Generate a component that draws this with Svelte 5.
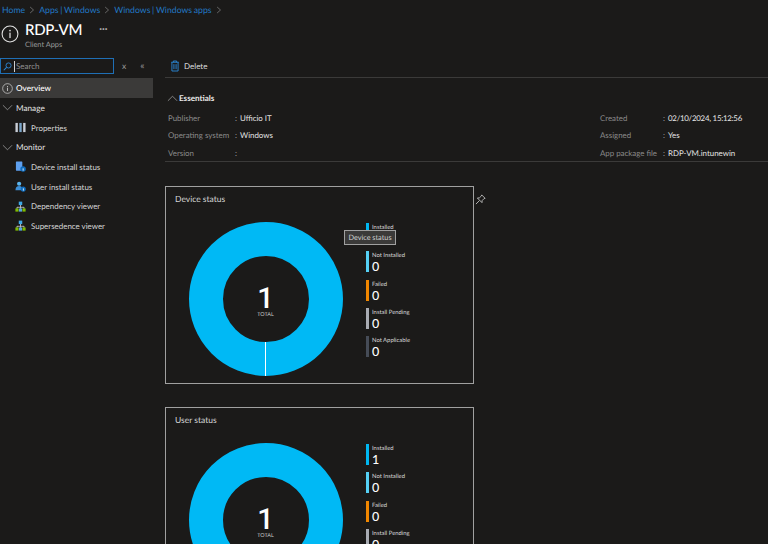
<script>
  const crumbs = ['Home', 'Apps | Windows', 'Windows | Windows apps'];
  const left = [['Publisher', 'Ufficio IT'], ['Operating system', 'Windows'], ['Version', '']];
  const right = [['Created', '02/10/2024, 15:12:56'], ['Assigned', 'Yes'], ['App package file', 'RDP-VM.intunewin']];
  const legend = (installed) => [
    ['Installed', installed, '#00b7f1'],
    ['Not Installed', 0, '#55d0f5'],
    ['Failed', 0, '#f18700'],
    ['Install Pending', 0, '#a9acb3'],
    ['Not Applicable', 0, '#464c57']
  ];
  const cards = [
    { title: 'Device status', installed: '', tooltip: true },
    { title: 'User status', installed: 1, tooltip: false }
  ];
</script>

{#snippet chevron(up)}
  <svg class="chev" viewBox="0 0 12 12" width="11" height="11">
    <path d={up ? 'M1 8.5 6 3.5l5 5' : 'M1 3.5 6 8.5l5-5'} fill="none" stroke="#a8a8a8" stroke-width="0.8" />
  </svg>
{/snippet}

{#snippet infoIcon(size)}
  <svg viewBox="0 0 20 20" width={size} height={size}>
    <circle cx="10" cy="10" r="8.8" fill="none" stroke="#e0e0e0" stroke-width="1.2" />
    <rect x="9.3" y="8.5" width="1.4" height="6" fill="#e0e0e0" />
    <circle cx="10" cy="6.2" r="0.95" fill="#e0e0e0" />
  </svg>
{/snippet}

{#snippet tree()}
  <svg viewBox="0 0 14 14" width="11" height="11">
    <path d="M7 5v3M2.5 10V8h9v2M7 8v2" fill="none" stroke="#d8d8d8" stroke-width="1" />
    <rect x="4.8" y="0.8" width="4.4" height="4.4" fill="#3ea8e6" />
    <rect x="0.5" y="9.5" width="4" height="4" fill="#7fba00" />
    <rect x="5" y="9.5" width="4" height="4" fill="#59a5e0" />
    <rect x="9.5" y="9.5" width="4" height="4" fill="#7fba00" />
  </svg>
{/snippet}

<div class="page">
  <nav class="crumbs">
    {#each crumbs as c}
      <a href="#top">{c}</a>
      <svg viewBox="0 0 8 10" width="6" height="8"><path d="M1.5 1 6 5 1.5 9" fill="none" stroke="#8a8a8a" stroke-width="0.9" /></svg>
    {/each}
  </nav>

  <header class="head">
    <span class="head-icon">{@render infoIcon(18)}</span>
    <div class="head-text">
      <div class="title-row"><h1>RDP-VM</h1><span class="dots">···</span></div>
      <div class="sub">Client Apps</div>
    </div>
  </header>

  <div class="body">
    <aside class="side">
      <div class="search-row">
        <div class="search">
          <svg viewBox="0 0 12 12" width="9" height="9"><circle cx="7.4" cy="4.6" r="3.4" fill="none" stroke="#2b88d8" stroke-width="1.2" /><path d="M4.8 7.2 1 11" stroke="#2b88d8" stroke-width="1.4" /></svg>
          <span class="caret"></span>
          <span class="ph">Search</span>
        </div>
        <span class="x">x</span>
        <span class="collapse">«</span>
      </div>
      <div class="item active top"><span class="ico">{@render infoIcon(11)}</span>Overview</div>
      <div class="item top">{@render chevron(false)}Manage</div>
      <div class="item sub-item">
        <svg viewBox="0 0 12 12" width="11" height="11">
          <rect x="0.5" y="1" width="2.6" height="10" fill="#c9ced6" /><rect x="4.7" y="1" width="2.6" height="10" fill="#7da7cc" /><rect x="8.9" y="1" width="2.6" height="10" fill="#c9ced6" />
        </svg>
        Properties
      </div>
      <div class="item top">{@render chevron(false)}Monitor</div>
      <div class="item sub-item">
        <svg viewBox="0 0 12 12" width="11" height="11">
          <rect x="1" y="0.5" width="7" height="10" rx="0.6" fill="#5ea0ef" />
          <circle cx="8.8" cy="8.8" r="3" fill="#0f6cbd" /><rect x="8.4" y="8" width="0.9" height="2.6" fill="#fff" />
        </svg>
        Device install status
      </div>
      <div class="item sub-item">
        <svg viewBox="0 0 12 12" width="11" height="11">
          <circle cx="4.5" cy="3" r="2.3" fill="#59b4ee" /><path d="M0.5 10c0-3 1.6-4.5 4-4.5s4 1.5 4 4.5z" fill="#3e8fd6" />
          <circle cx="9" cy="8.8" r="2.8" fill="#0f6cbd" /><rect x="8.6" y="8" width="0.9" height="2.5" fill="#fff" />
        </svg>
        User install status
      </div>
      <div class="item sub-item">{@render tree()}Dependency viewer</div>
      <div class="item sub-item">{@render tree()}Supersedence viewer</div>
    </aside>

    <main class="main">
      <div class="toolbar">
        <svg viewBox="0 0 12 14" width="10" height="12">
          <path d="M1.5 2.5h9M4 2.5V1h4v1.5M2.3 2.5V13h7.4V2.5" fill="none" stroke="#2b88d8" stroke-width="1.1" />
          <path d="M4.4 4.8v6M6 4.8v6M7.6 4.8v6" stroke="#2b88d8" stroke-width="0.8" />
        </svg>
        <span>Delete</span>
      </div>

      <section class="ess">
        <div class="ess-head">{@render chevron(true)}<b>Essentials</b></div>
        <div class="ess-cols">
          <dl class="col">
            {#each left as [k, v]}<div class="kv"><dt>{k}</dt><dd><i>:</i>{v}</dd></div>{/each}
          </dl>
          <dl class="col col-right">
            {#each right as [k, v]}<div class="kv"><dt>{k}</dt><dd><i>:</i>{v}</dd></div>{/each}
          </dl>
        </div>
      </section>

      {#each cards as card}
        <div class="card-row">
          <article class="card">
            <h2>{card.title}</h2>
            <div class="chart">
              <svg class="donut" viewBox="0 0 154 154" width="154" height="154">
                <circle cx="77" cy="77" r="60" fill="none" stroke="#00b9f5" stroke-width="34" />
                <path d="M76.5 120v34" stroke="#ffffff" stroke-width="1" />
                <text x="76.5" y="86" class="big" text-anchor="middle">1</text>
                <text x="76.5" y="93.5" class="tot" text-anchor="middle">TOTAL</text>
              </svg>
              <ul class="legend">
                {#each legend(card.installed) as [name, value, colour]}
                  <li>
                    <span class="bar" style="background:{colour}"></span>
                    <div><div class="lname">{name}</div><div class="lval">{value}</div></div>
                  </li>
                {/each}
              </ul>
            </div>
            {#if card.tooltip}<div class="tip">Device status</div>{/if}
          </article>
          {#if card.tooltip}
            <svg class="pin" viewBox="0 0 12 12" width="11" height="11">
              <path d="M7.3 1 11 4.7 9.9 5 7.8 7.2 7.6 9.4 2.6 4.4 4.8 4.2 7 2.1zM4.8 7.2 1 11" fill="none" stroke="#d0d0d0" stroke-width="0.9" />
            </svg>
          {/if}
        </div>
      {/each}
    </main>
  </div>
</div>

<style>
  :global(body) { margin: 0; background: #1b1a19; }
  .page {
    width: 768px; height: 544px; overflow: hidden; background: #1b1a19;
    color: #e6e6e6; font-family: Lato, Roboto, sans-serif; font-size: 8px;
    text-rendering: geometricPrecision;
  }
  .crumbs { display: flex; align-items: center; gap: 4px; height: 19px; padding-left: 2px; font-size: 8.7px; word-spacing: -0.5px; }
  .crumbs a { color: #2278c4; text-decoration: none; }
  .head { display: flex; gap: 6px; height: 39px; padding-left: 1px; }
  .head-icon { padding-top: 6px; }
  .head-text { padding-top: 1px; }
  .title-row { display: flex; align-items: center; gap: 17px; height: 20px; }
  h1 { margin: 0; font-size: 15px; font-weight: 500; color: #fff; line-height: 20px; letter-spacing: -0.3px; }
  .dots { color: #a8a8a8; font-size: 10px; margin-top: -2px; font-weight: 700; }
  .sub { font-size: 7.4px; color: #9a9a9a; line-height: 10px; }

  .body { display: flex; }
  .side { width: 153px; flex: none; }
  .search-row { display: flex; align-items: center; height: 16px; margin-bottom: 4px; }
  .search {
    box-sizing: border-box; width: 114px; height: 16px; border: 1px solid #1f6fb5;
    display: flex; align-items: center; padding-left: 2px; gap: 2px; flex: none;
  }
  .caret { width: 1px; height: 11px; background: #d0d0d0; }
  .ph { color: #8f8f8f; font-size: 8px; margin-left: -1px; }
  .x { margin-left: 8px; color: #9a9a9a; font-size: 8.5px; }
  .collapse { margin-left: 14px; color: #8f8f8f; font-size: 10px; }
  .item { display: flex; align-items: center; height: 19.7px; }
  .top { padding-left: 2px; gap: 3px; font-size: 8.2px; }
  .top .ico { display: flex; }
  .active { background: #3b3a39; color: #fff; height: 20px; font-weight: 500; }
  .sub-item { padding-left: 15px; gap: 5px; color: #d6d6d6; font-size: 7.95px; }
  .chev { flex: none; }

  .main { flex: 1; padding-left: 12px; min-width: 0; }
  .toolbar {
    display: flex; align-items: center; gap: 4px; height: 16px; padding: 0 0 3px 5px;
    border-bottom: 1px solid #3b3a39; font-size: 8px; color: #dcdcdc;
  }
  .ess { border-bottom: 1px solid #3b3a39; margin-bottom: 24px; }
  .ess-head { display: flex; align-items: center; gap: 1px; height: 20px; margin-top: 10px; padding-left: 2px; }
  .ess-head b { font-weight: 700; font-size: 8.1px; color: #ececec; }
  .ess-cols { display: flex; height: 52.2px; margin-top: 1px; }
  dl { margin: 0; padding-left: 3px; }
  .col { width: 432px; flex: none; }
  .col-right { width: auto; padding-left: 0; }
  .kv { display: flex; height: 17.6px; align-items: center; font-size: 7.9px; }
  dt { width: 67px; color: #8b8b8b; flex: none; white-space: nowrap; }
  .col-right dt { width: 63px; }
  dd { margin: 0; color: #e4e4e4; white-space: nowrap; }
  .col-right .kv:first-child dd { letter-spacing: -0.25px; }
  dd i { font-style: normal; color: #a8a8a8; display: inline-block; width: 5px; }

  .card-row { display: flex; gap: 1px; margin-bottom: 23px; }
  .card {
    box-sizing: border-box; width: 309px; height: 198px; flex: none; border: 1px solid #a0a0a0;
    position: relative; padding: 6px 9px;
  }
  h2 { margin: 0; font-size: 8.5px; font-weight: 400; color: #d6d6d6; line-height: 13px; }
  .chart { display: flex; margin-top: 16px; margin-left: 14px; gap: 23px; }
  .donut { flex: none; }
  .big { font-size: 29px; font-weight: 500; fill: #fff; font-family: Roboto, sans-serif; }
  .tot { font-size: 5.4px; fill: #c8c8c8; font-family: Lato, sans-serif; }
  .legend { list-style: none; margin: 1px 0 0; padding: 0; display: flex; flex-direction: column; gap: 7.3px; }
  .legend li { display: flex; gap: 3px; height: 21px; }
  .bar { width: 3px; height: 21px; flex: none; }
  .lname { font-size: 5.9px; line-height: 9px; color: #d8d8d8; white-space: nowrap; }
  .lval { font-size: 12.5px; line-height: 13px; color: #fff; font-weight: 500; }
  .tip {
    position: absolute; left: 178px; top: 43px; box-sizing: border-box; width: 52px; height: 15px;
    background: #3b3a39; border: 1px solid #a0a0a0; color: #d0d0d0; font-size: 7.3px;
    display: flex; align-items: center; justify-content: center;
  }
  .pin { margin-top: 8px; }
</style>
